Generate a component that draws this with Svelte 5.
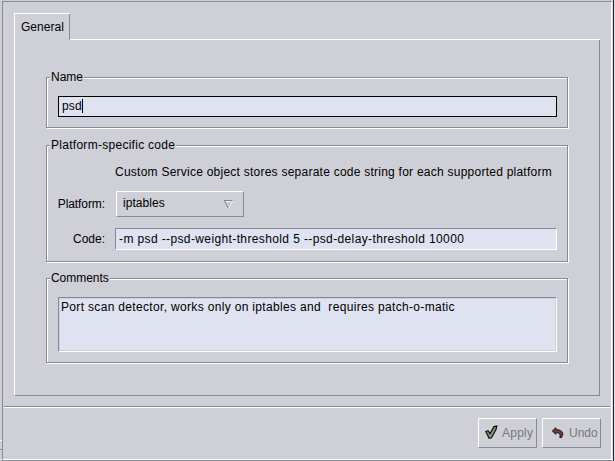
<script>
  let name = $state('psd');
  let code = $state('-m psd --psd-weight-threshold 5 --psd-delay-threshold 10000');
  let comments = $state('Port scan detector, works only on iptables and  requires patch-o-matic');
</script>

<div class="screen">
  <div class="edge"></div>
  <main class="window">
    <div class="tabs"><div class="tab"><span class="t-general">General</span></div><div class="tabline"></div></div>
    <section class="panel">
      <div class="group g-name">
        <span class="legend t-name">Name</span>
        <div class="field focused"><span class="t-psd">{name}</span><i class="caret"></i></div>
      </div>

      <div class="group g-code">
        <span class="legend t-psc">Platform-specific code</span>
        <p class="hint">Custom Service object stores separate code string for each supported platform</p>
        <div class="row platform">
          <span class="label"><span class="t-platform">Platform:</span></span>
          <div class="combo">
            <span class="t-ipt">iptables</span>
            <svg width="9" height="9" viewBox="0 0 9 9" fill="none">
              <path d="M.5 .5L4 8" stroke="#85858f" />
              <path d="M0 .5H8.5" stroke="#85858f" />
              <path d="M1.8 1.5H7" stroke="#f4f4fa" />
              <path d="M8.3 1L4.7 8.3" stroke="#fff" />
              <path d="M7.3 1.3L4.3 7.3" stroke="#a5a5af" stroke-width=".7" />
            </svg>
          </div>
        </div>
        <div class="row code">
          <span class="label"><span class="t-code">Code:</span></span>
          <div class="field sunken"><span class="t-codeval">{code}</span></div>
        </div>
      </div>

      <div class="group g-comments">
        <span class="legend t-comments">Comments</span>
        <div class="area"><span class="t-area">{comments}</span></div>
      </div>
    </section>

    <footer>
      <button class="apply">
        <svg width="13" height="15" viewBox="0 0 13 15">
          <path d="M.8 6.5L3 5.7L5 8.7L9 1.6L11.8 1L11 4.5L6.5 12.8L4.2 13.3Z" fill="#819a7a" stroke="#0c100c" stroke-width="1.2" />
        </svg>
        <span class="t-apply">Apply</span>
      </button>
      <button class="undo">
        <svg width="12" height="12" viewBox="0 0 12 12">
          <path d="M.3 4L3.8 .7V2.6C7.5 2.4 10.7 4 10.9 7.3L9.5 10.8L7.6 10.3C9 8 7.4 5.5 3.8 5.6V7.3Z" fill="#6a3f3a" stroke="#1a0c0c" stroke-width=".9" />
        </svg>
        <span class="t-undo">Undo</span>
      </button>
    </footer>
  </main>
  <div class="gutter"></div>
</div>

<style>
  :global(body) { margin: 0; background: #cfcfd8; }
  * { box-sizing: border-box; }
  .screen {
    display: flex;
    width: 615px;
    height: 461px;
    padding-top: 1px;
    overflow: hidden;
    background: #cfcfd8;
    color: #000;
    font: 12px/14px "Liberation Sans", Arial, sans-serif;
  }
  .edge {
    width: 2px;
    height: 10px;
    margin-top: 439px;
    border-top: 1px solid #fff;
    border-bottom: 1px solid #898994;
  }
  .window {
    width: 610px;
    height: 459px;
    padding-top: 11px;
    border-left: 1px solid #898994;
    border-top: 1px solid #898994;
    border-right: 1px solid #fff;
    border-bottom: 1px solid #fff;
    box-shadow: 0 1px #898994;
  }
  .gutter { width: 3px; height: 461px; margin-top: -1px; border-left: 1px solid #d8d8df; border-right: 1px solid #d8d8df; background: #26262b; }
  .tabs { display: flex; height: 27px; margin: 0 11px; align-items: flex-end; }
  .tab {
    width: 56px;
    height: 27px;
    padding: 6px 0 0 6px;
    border: solid #fff;
    border-width: 1px 0 0 1px;
    box-shadow: inset -1px 0 #898994;
  }
  .tabline { flex: 1; height: 1px; background: #fff; }
  .panel {
    height: 356px;
    margin: 0 11px;
    padding: 37px 31px 0;
    border: 1px solid #898994;
    border-top: 0;
    border-left-color: #fff;
  }
  .group {
    width: 522px;
    border: 1px solid #898994;
    box-shadow: 1px 1px #fff, inset 1px 1px #fff;
    padding: 0 11px;
  }
  .legend {
    display: block;
    width: max-content;
    height: 14px;
    margin: -8px 0 0 -8px;
    padding: 0 1px;
    background: #cfcfd8;
  }
  .g-name { height: 51px; }
  .g-code { height: 117px; margin-top: 17px; padding-right: 10px; }
  .g-comments { height: 85px; margin-top: 16px; }
  .g-name, .g-comments { padding-right: 10px; }
  .field { display: flex; align-items: center; height: 22px; background: #dfe2f0; padding-left: 3px; }
  .focused { width: 499px; height: 21px; margin-top: 12px; border: 1px solid #000; padding-bottom: 1px; }
  .caret { width: 1px; height: 14px; background: #000; }
  .sunken { width: 442px; border: 1px solid #fff; border-top-color: #898994; border-left-color: #898994; }
  .hint { margin: 13px 0 0 57px; height: 14px; white-space: nowrap; letter-spacing: .243px; }
  .t-codeval { letter-spacing: .38px; white-space: pre; }
  .t-area { letter-spacing: .33px; white-space: pre; }
  .t-psc { letter-spacing: .28px; }
  .t-general { letter-spacing: .03px; }
  .t-psd { letter-spacing: .15px; }
  .t-platform { letter-spacing: -.08px; }
  .t-ipt { letter-spacing: .05px; margin-top: -1px; }
  .t-comments { letter-spacing: -.05px; }
  .t-apply { letter-spacing: .25px; }
  .row { display: flex; align-items: center; }
  .label { display: flex; justify-content: flex-end; width: 47px; flex: none; }
  .platform { height: 26px; margin-top: 12px; }
  .combo {
    display: flex;
    justify-content: space-between;
    align-items: center;
    width: 128px;
    height: 26px;
    margin-left: 11px;
    padding: 0 10px 1px 6px;
    border: 1px solid #898994;
    border-top-color: #fff;
    border-left-color: #fff;
  }
  .combo svg { margin-top: 1px; }
  .code { height: 22px; margin-top: 11px; }
  .code .field { margin-left: 10px; }
  .area {
    width: 499px;
    height: 55px;
    margin-top: 12px;
    padding: 2px 2px;
    border: 1px solid #fff;
    border-top-color: #898994;
    border-left-color: #898994;
    box-shadow: inset 0 0 0 1px #cfcfd8;
    background: #dfe2f0;
  }
  footer {
    display: flex;
    justify-content: flex-end;
    gap: 5px;
    height: 53px;
    margin: 10px 1px 0 1px;
    padding: 11px 9px 0 0;
    border-top: 1px solid #898994;
    box-shadow: inset 0 1px #fff;
  }
  button {
    display: flex;
    align-items: center;
    width: 59px;
    height: 30px;
    padding: 0 0 1px 6px;
    border: 1px solid #898994;
    border-top-color: #fff;
    border-left-color: #fff;
    background: #cfcfd8;
    color: #77777b;
    font: inherit;
  }
  .apply svg { margin-right: 4px; }
  .undo { padding-left: 9px; }
  .undo svg { margin-right: 5px; }
</style>
